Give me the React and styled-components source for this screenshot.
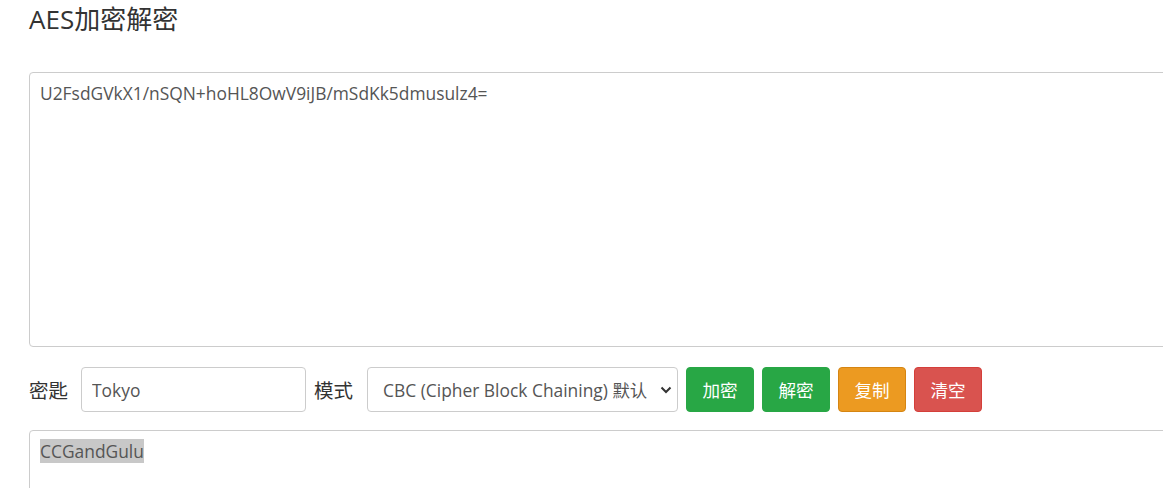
import styled, { createGlobalStyle } from 'styled-components';

const GlobalStyle = createGlobalStyle`
    html, body {
        margin: 0;
        padding: 0;
        background: #fff;
        overflow: hidden;
    }
    body {
        font-family: "Open Sans", "Noto Sans CJK SC", sans-serif;
        color: #333;
    }
`;

const App = () => {
    return (
        <Page>
            <GlobalStyle />
            <Title>AES加密解密</Title>
            <InputArea>U2FsdGVkX1/nSQN+hoHL8OwV9iJB/mSdKk5dmusulz4=</InputArea>
            <Toolbar>
                <Label>密匙</Label>
                <KeyInput defaultValue="Tokyo" />
                <Label $first={false}>模式</Label>
                <ModeSelect>
                    <span>CBC (Cipher Block Chaining) 默认</span>
                    <svg width="12" height="8" viewBox="0 0 12 8">
                        <path d="M1.5 1.5 L6 6 L10.5 1.5" fill="none" stroke="#333" strokeWidth="2" />
                    </svg>
                </ModeSelect>
                <ActionButton $bg="#28a745" $border="#28a745">加密</ActionButton>
                <ActionButton $bg="#28a745" $border="#28a745">解密</ActionButton>
                <ActionButton $bg="#ec9a21" $border="#d58512">复制</ActionButton>
                <ActionButton $bg="#d9534f" $border="#d43f3a">清空</ActionButton>
            </Toolbar>
            <OutputArea>
                <Selected>CCGandGulu</Selected>
            </OutputArea>
        </Page>
    );
};
export default App;

const Page = styled.div`
    padding: 0 0 0 29px;
    width: 1300px;
`;

const Title = styled.h1`
    margin: 0;
    padding-top: 3px;
    height: 72px;
    box-sizing: border-box;
    font-size: 26px;
    font-weight: 400;
    line-height: 32px;
    color: #333;
`;

const InputArea = styled.div`
    box-sizing: border-box;
    width: 1200px;
    height: 275px;
    border: 1px solid #ccc;
    border-radius: 4px;
    padding: 7px 10px;
    font-size: 17.4px;
    line-height: 26px;
    color: #555;
`;

const Toolbar = styled.div`
    display: flex;
    align-items: center;
    margin: 20px 0 18px;
    height: 45px;
`;

const Label = styled.span`
    font-size: 19.5px;
    color: #333;
    margin-right: ${p => (p.$first === false ? '14px' : '13px')};
    margin-left: ${p => (p.$first === false ? '8px' : '0')};
`;

const KeyInput = styled.input`
    box-sizing: border-box;
    width: 225px;
    height: 45px;
    border: 1px solid #ccc;
    border-radius: 4px;
    padding: 0 10px;
    font-family: inherit;
    font-size: 17.4px;
    color: #555;
    outline: none;
`;

const ModeSelect = styled.div`
    box-sizing: border-box;
    width: 311px;
    height: 45px;
    border: 1px solid #ccc;
    border-radius: 4px;
    padding: 0 5px 0 15px;
    display: flex;
    align-items: center;
    justify-content: space-between;
    font-size: 17.4px;
    color: #555;
    margin-right: 8px;
    white-space: nowrap;
    overflow: hidden;
`;

const ActionButton = styled.button`
    box-sizing: border-box;
    width: 68px;
    height: 45px;
    margin-right: 8px;
    padding: 0;
    border: 1px solid ${p => p.$border};
    border-radius: 4px;
    background: ${p => p.$bg};
    color: #fff;
    font-family: inherit;
    font-size: 17.6px;
    cursor: pointer;
`;

const OutputArea = styled.div`
    box-sizing: border-box;
    width: 1200px;
    height: 200px;
    border: 1px solid #ccc;
    border-radius: 4px;
    padding: 8px 10px;
    font-size: 17.4px;
    line-height: 24px;
    color: #555;
`;

const Selected = styled.span`
    background: #c8c8c8;
`;
